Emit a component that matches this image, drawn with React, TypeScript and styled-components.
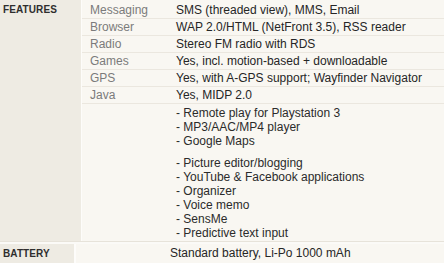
import React from "react";
import styled, { createGlobalStyle } from "styled-components";

const Global = createGlobalStyle`
  html, body {
    margin: 0;
    padding: 0;
    background: #fbfaf7;
  }
  body {
    font-family: "Liberation Sans", Arial, sans-serif;
    color: #2b2b2b;
  }
`;

const Spec = styled.div`
  width: 444px;
  display: flex;
  flex-direction: column;
  gap: 2px;
`;

const Group = styled.section<{ $titleWidth: number }>`
  display: grid;
  grid-template-columns: ${(p) => p.$titleWidth}px 1fr;
  column-gap: ${(p) => (p.$titleWidth === 81 ? 1 : 2)}px;
  background: #fdfcfa;
  border-bottom: 1px solid #e7e3da;
`;

const GroupTitle = styled.div`
  background: #eeebe3;
  font-size: 10px;
  font-weight: bold;
  line-height: 16px;
  letter-spacing: 0.1px;
  color: #2e2e2e;
  padding: 2px 0 0 3px;
`;

const Rows = styled.div`
  background: #f9f7f2;
  padding-top: 2px;
  display: flex;
  flex-direction: column;
`;

const Row = styled.div<{ $last?: boolean }>`
  display: grid;
  grid-template-columns: 90px 1fr;
  border-bottom: ${(p) => (p.$last ? "none" : "1px solid #ebe7df")};
`;

const Label = styled.div`
  font-size: 12px;
  line-height: 16px;
  color: #7b7b7b;
  padding-left: 8px;
`;

const Value = styled.div<{ $indent?: number }>`
  font-size: 12px;
  line-height: 16px;
  color: #262626;
  padding-left: ${(p) => p.$indent ?? 4}px;
`;

const ListBlock = styled.ul`
  list-style: none;
  margin: 0;
  padding: 0;
  & + & {
    margin-top: 8px;
  }
`;

const ListItem = styled.li`
  font-size: 12px;
  line-height: 14px;
`;

const ListCell = styled.div`
  grid-column: 2;
  padding: 2px 0 1px 4px;
`;

const BatteryValue = styled.div`
  background: #f9f7f2;
  font-size: 12px;
  line-height: 18px;
  color: #262626;
  padding-left: 94px;
  height: 19px;
`;

const features: [string, string][] = [
  ["Messaging", "SMS (threaded view), MMS, Email"],
  ["Browser", "WAP 2.0/HTML (NetFront 3.5), RSS reader"],
  ["Radio", "Stereo FM radio with RDS"],
  ["Games", "Yes, incl. motion-based + downloadable"],
  ["GPS", "Yes, with A-GPS support; Wayfinder Navigator"],
  ["Java", "Yes, MIDP 2.0"],
];

const extrasA = ["Remote play for Playstation 3", "MP3/AAC/MP4 player", "Google Maps"];
const extrasB = [
  "Picture editor/blogging",
  "YouTube & Facebook applications",
  "Organizer",
  "Voice memo",
  "SensMe",
  "Predictive text input",
];

export default function App() {
  return (
    <>
      <Global />
      <Spec>
        <Group $titleWidth={81}>
          <GroupTitle>FEATURES</GroupTitle>
          <Rows>
            {features.map(([k, v]) => (
              <Row key={k}>
                <Label>{k}</Label>
                <Value>{v}</Value>
              </Row>
            ))}
            <Row $last>
              <ListCell>
                <ListBlock>
                  {extrasA.map((t) => (
                    <ListItem key={t}>- {t}</ListItem>
                  ))}
                </ListBlock>
                <ListBlock>
                  {extrasB.map((t) => (
                    <ListItem key={t}>- {t}</ListItem>
                  ))}
                </ListBlock>
              </ListCell>
            </Row>
          </Rows>
        </Group>
        <Group $titleWidth={74}>
          <GroupTitle>BATTERY</GroupTitle>
          <BatteryValue>Standard battery, Li-Po 1000 mAh</BatteryValue>
        </Group>
      </Spec>
    </>
  );
}
